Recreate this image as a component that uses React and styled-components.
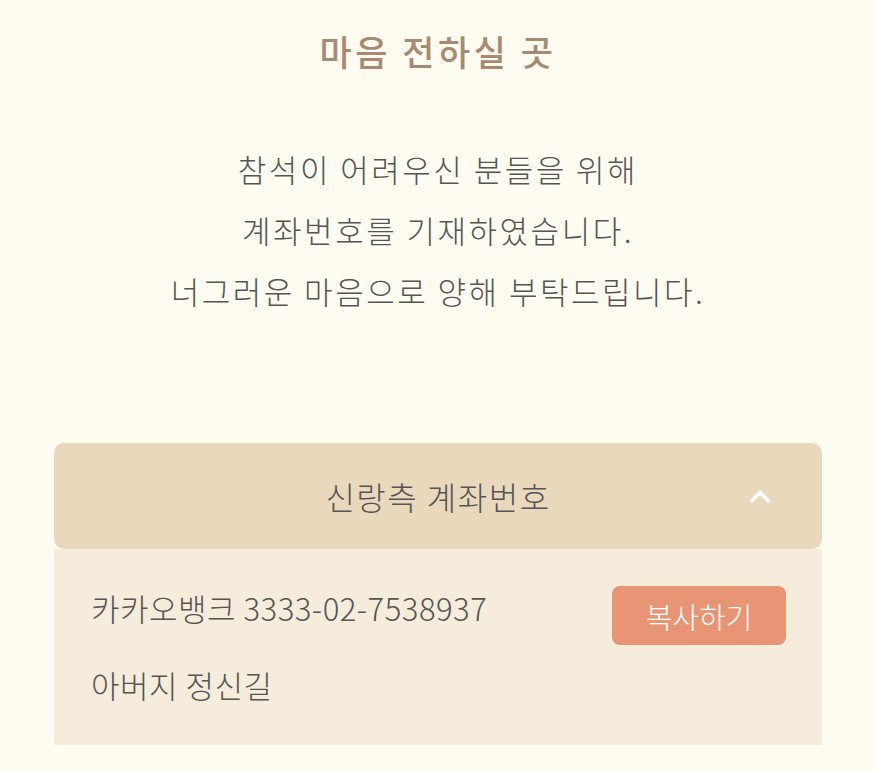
import React, { useState } from "react";
import styled, { createGlobalStyle } from "styled-components";

const GlobalStyle = createGlobalStyle`
  html, body {
    margin: 0;
    padding: 0;
    background-color: #fefbf0;
  }
  body {
    font-family: "Noto Sans CJK KR", "Noto Sans", sans-serif;
    color: #555;
  }
`;

const PageStyled = styled.div`
  min-height: 771px;
  padding: 26px 53px 0 54px;
  box-sizing: border-box;
  background-color: #fefbf0;
`;

const TitleStyled = styled.h2`
  margin: 0;
  text-align: center;
  font-size: 35px;
  font-weight: 500;
  letter-spacing: 3.5px;
  color: #a88a73;
  line-height: 50px;
`;

const MessageStyled = styled.p`
  margin: 62px 0 0;
  text-align: center;
  font-size: 31px;
  font-weight: 300;
  line-height: 61px;
  letter-spacing: 2.5px;
  color: #555;
`;

const AccordionStyled = styled.div`
  margin-top: 122px;
`;

const HeaderStyled = styled.button`
  position: relative;
  display: flex;
  justify-content: center;
  align-items: center;
  width: 100%;
  height: 106px;
  border: 0;
  border-radius: 10px;
  background-color: #ead8bc;
  font-family: inherit;
  font-size: 32px;
  font-weight: 300;
  letter-spacing: 1.5px;
  color: #555;
  cursor: pointer;
  &:focus {
    outline: none;
  }
`;

const ChevronStyled = styled.svg`
  position: absolute;
  right: 48px;
  top: 50%;
  width: 28px;
  height: 28px;
  margin-top: -14px;
`;

const BodyStyled = styled.div`
  padding: 37px 36px 38px 37px;
  background-color: #f5ecdb;
`;

const RowStyled = styled.div`
  display: flex;
  justify-content: space-between;
  align-items: flex-start;
  & + & {
    margin-top: 18px;
  }
`;

const RowTextStyled = styled.span`
  font-size: 31px;
  font-weight: 300;
  letter-spacing: 0.5px;
  line-height: 44px;
  color: #555;
`;

const CopyButtonStyled = styled.button`
  width: 174px;
  height: 59px;
  border: 0;
  border-radius: 8px;
  background-color: #e89575;
  font-family: inherit;
  font-size: 29px;
  font-weight: 300;
  color: #fff;
  cursor: pointer;
`;

function Account({ bank, number, holder }) {
  return (
    <>
      <RowStyled>
        <RowTextStyled>
          {bank} {number}
        </RowTextStyled>
        <CopyButtonStyled onClick={() => navigator.clipboard?.writeText(number)}>
          복사하기
        </CopyButtonStyled>
      </RowStyled>
      <RowStyled>
        <RowTextStyled>{holder}</RowTextStyled>
      </RowStyled>
    </>
  );
}

function App() {
  const [open, setOpen] = useState(true);

  return (
    <PageStyled>
      <GlobalStyle />
      <TitleStyled>마음 전하실 곳</TitleStyled>
      <MessageStyled>
        참석이 어려우신 분들을 위해
        <br />
        계좌번호를 기재하였습니다.
        <br />
        너그러운 마음으로 양해 부탁드립니다.
      </MessageStyled>
      <AccordionStyled>
        <HeaderStyled onClick={() => setOpen(!open)}>
          신랑측 계좌번호
          <ChevronStyled viewBox="0 0 24 24" fill="none">
            <path
              d={open ? "M5 16l7-7 7 7" : "M5 9l7 7 7-7"}
              stroke="#fff"
              strokeWidth="3"
              strokeLinecap="square"
            />
          </ChevronStyled>
        </HeaderStyled>
        {open ? (
          <BodyStyled>
            <Account bank="카카오뱅크" number="3333-02-7538937" holder="아버지 정신길" />
          </BodyStyled>
        ) : null}
      </AccordionStyled>
    </PageStyled>
  );
}

export default App;
